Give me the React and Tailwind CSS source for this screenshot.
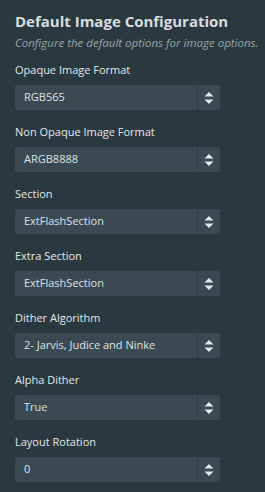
import React from "react";

const fields = [
  { label: "Opaque Image Format", value: "RGB565" },
  { label: "Non Opaque Image Format", value: "ARGB8888" },
  { label: "Section", value: "ExtFlashSection" },
  { label: "Extra Section", value: "ExtFlashSection" },
  { label: "Dither Algorithm", value: "2- Jarvis, Judice and Ninke" },
  { label: "Alpha Dither", value: "True" },
  { label: "Layout Rotation", value: "0" },
];

function SpinArrows() {
  return (
    <svg width="10" height="14" viewBox="0 0 10 14" className="text-[#e4e8ea]">
      <path d="M5 1 L9.5 5.5 L0.5 5.5 Z" fill="currentColor" />
      <path d="M5 13 L9.5 8.5 L0.5 8.5 Z" fill="currentColor" />
    </svg>
  );
}

function SelectField({ label, value }) {
  return (
    <div className="flex flex-col">
      <label className="text-[11px] leading-[16px] text-[#e3e7e9]">{label}</label>
      <div className="mt-[7px] flex h-[25px] w-[205px] items-center rounded-[2px] bg-[#3b4a52]">
        <span className="flex-1 pl-[9px] text-[11px] text-[#dde2e4]">{value}</span>
        <div className="flex h-full w-[23px] items-center justify-center border-l border-[#2f3d44]">
          <SpinArrows />
        </div>
      </div>
    </div>
  );
}

export default function App() {
  return (
    <div
      className="h-[492px] w-[265px] overflow-hidden bg-[#2a3940] pl-[15px] pt-[10px]"
      style={{ fontFamily: '"Open Sans", "Noto Sans", sans-serif' }}
    >
      <h1 className="whitespace-nowrap text-[15px] font-bold leading-[22px] text-[#d7dcdf]">
        Default Image Configuration
      </h1>
      <p className="mt-[2px] whitespace-nowrap text-[11.5px] italic leading-[18px] text-[#98a3a8]">
        Configure the default options for image options.
      </p>
      <div className="mt-[10px] flex flex-col gap-[14px]">
        {fields.map((f) => (
          <SelectField key={f.label} label={f.label} value={f.value} />
        ))}
      </div>
    </div>
  );
}
